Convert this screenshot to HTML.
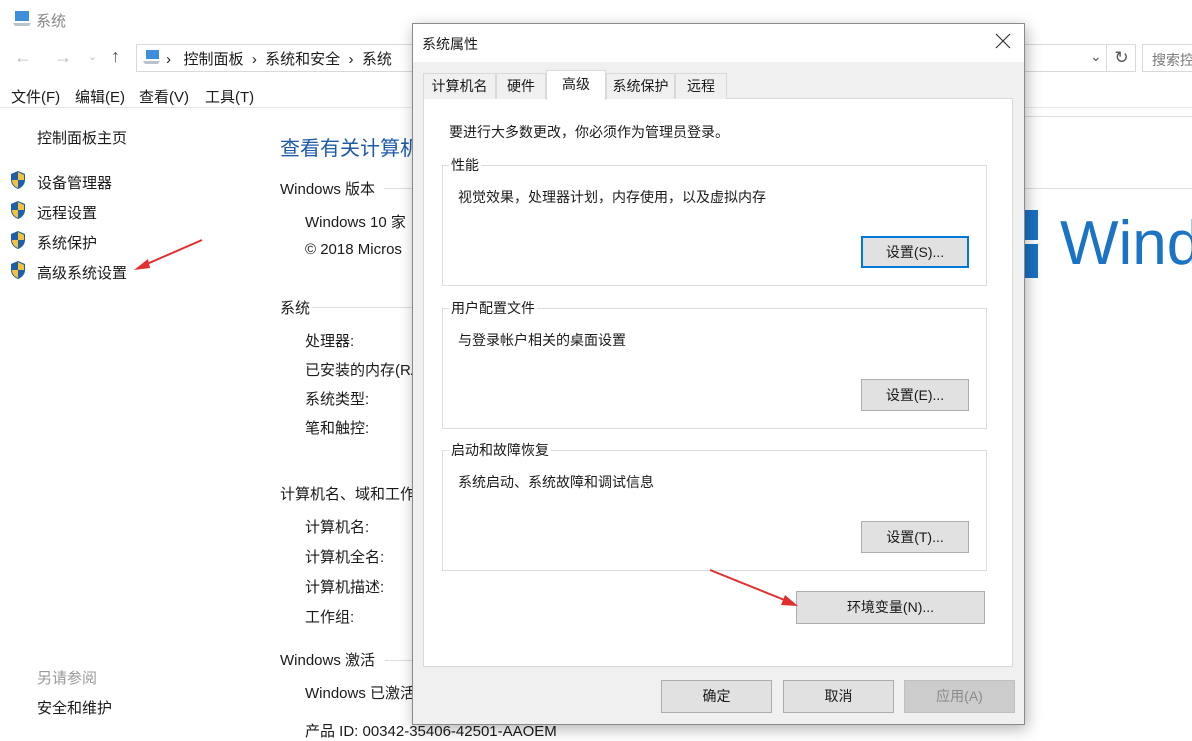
<!DOCTYPE html>
<html><head><meta charset="utf-8"><style>
*{margin:0;padding:0;box-sizing:border-box}
body{width:1192px;height:738px;overflow:hidden;background:#fff;font-family:"Liberation Sans","Noto Sans CJK SC",sans-serif;color:#1a1a1a;position:relative;font-size:14px}
.a{position:absolute;white-space:nowrap}
.bg{font-size:15px}
.shield{position:absolute;width:18px;height:20px}
.btn{position:absolute;background:#e1e1e1;border:1px solid #adadad;text-align:center;font-size:14px;line-height:30px}
.grp{position:absolute;border:1px solid #dcdcdc}
.grp .t{position:absolute;left:6px;top:-10px;background:#fff;padding:0 2px;line-height:18px}
.tab{position:absolute;top:73px;height:26px;background:#f0f0f0;border:1px solid #d9d9d9;border-bottom:none;line-height:24px;text-align:center;font-size:14px}
</style></head><body>
<svg class="a" style="left:12px;top:10px" width="20" height="16"><rect x="3" y="1" width="14" height="10" fill="#3c8fd8"/><path d="M1 13h18l-2 3H3z" fill="#b8c4cc"/></svg>
<div class="a" style="left:36px;top:10px;color:#888;font-size:15px">系统</div>
<div class="a" style="left:14px;top:47px;color:#bbb;font-size:18px">←</div>
<div class="a" style="left:54px;top:47px;color:#bbb;font-size:18px">→</div>
<div class="a" style="left:88px;top:50px;color:#bbb;font-size:11px">⌄</div>
<div class="a" style="left:111px;top:46px;color:#555;font-size:18px">↑</div>
<div class="a" style="left:136px;top:44px;width:280px;height:28px;border:1px solid #d9d9d9"></div>
<svg class="a" style="left:142px;top:49px" width="20" height="16"><rect x="4" y="1" width="13" height="9" fill="#3c8fd8"/><path d="M1 12h17l-2 3H3z" fill="#b8c4cc"/></svg>
<div class="a bg" style="left:166px;top:48px">›&nbsp;&nbsp;&nbsp;控制面板&nbsp;&nbsp;›&nbsp;&nbsp;系统和安全&nbsp;&nbsp;›&nbsp;&nbsp;系统</div>
<div class="a" style="left:1024px;top:44px;width:112px;height:28px;border:1px solid #d9d9d9;border-left:none"></div>
<div class="a" style="left:1090px;top:48px;color:#555;font-size:14px">⌄</div>
<div class="a" style="left:1106px;top:44px;width:30px;height:28px;border-left:1px solid #d9d9d9;text-align:center;line-height:28px;color:#555;font-size:17px">↻</div>
<div class="a" style="left:1142px;top:44px;width:60px;height:28px;border:1px solid #d9d9d9;color:#777;padding:5px 9px;font-size:14px">搜索控</div>
<div class="a bg" style="left:11px;top:86px">文件(F)</div>
<div class="a bg" style="left:75px;top:86px">编辑(E)</div>
<div class="a bg" style="left:139px;top:86px">查看(V)</div>
<div class="a bg" style="left:205px;top:86px">工具(T)</div>
<div class="a" style="left:0;top:107px;width:1192px;height:1px;background:#e8e8e8"></div>
<div class="a bg" style="left:37px;top:127px">控制面板主页</div>
<div class="a bg" style="left:37px;top:172px">设备管理器</div>
<div class="a bg" style="left:37px;top:202px">远程设置</div>
<div class="a bg" style="left:37px;top:232px">系统保护</div>
<div class="a bg" style="left:37px;top:262px">高级系统设置</div>
<svg class="shield" style="left:9px;top:170px" viewBox="0 0 18 20"><path d="M9 1L16 4V10C16 15 12 18 9 19C6 18 2 15 2 10V4Z" fill="#1f5fa8"/><path d="M9 2V10H15V5Z" fill="#f5c33b"/><path d="M3 10H9V18C6 17 3 14 3 10Z" fill="#f5c33b"/></svg>
<svg class="shield" style="left:9px;top:200px" viewBox="0 0 18 20"><path d="M9 1L16 4V10C16 15 12 18 9 19C6 18 2 15 2 10V4Z" fill="#1f5fa8"/><path d="M9 2V10H15V5Z" fill="#f5c33b"/><path d="M3 10H9V18C6 17 3 14 3 10Z" fill="#f5c33b"/></svg>
<svg class="shield" style="left:9px;top:230px" viewBox="0 0 18 20"><path d="M9 1L16 4V10C16 15 12 18 9 19C6 18 2 15 2 10V4Z" fill="#1f5fa8"/><path d="M9 2V10H15V5Z" fill="#f5c33b"/><path d="M3 10H9V18C6 17 3 14 3 10Z" fill="#f5c33b"/></svg>
<svg class="shield" style="left:9px;top:260px" viewBox="0 0 18 20"><path d="M9 1L16 4V10C16 15 12 18 9 19C6 18 2 15 2 10V4Z" fill="#1f5fa8"/><path d="M9 2V10H15V5Z" fill="#f5c33b"/><path d="M3 10H9V18C6 17 3 14 3 10Z" fill="#f5c33b"/></svg>
<svg class="a" style="left:130px;top:235px" width="75" height="40"><path d="M72 5L10 32" stroke="#e03030" stroke-width="2"/><path d="M4 35L18 24L20 33Z" fill="#e03030"/></svg>
<div class="a bg" style="left:37px;top:667px;color:#999">另请参阅</div>
<div class="a bg" style="left:37px;top:697px">安全和维护</div>
<div class="a" style="left:280px;top:132px;color:#1e5aa8;font-size:20px">查看有关计算机</div>
<div class="a bg" style="left:280px;top:178px">Windows 版本</div>
<div class="a" style="left:384px;top:188px;width:30px;height:1px;background:#ddd"></div>
<div class="a bg" style="left:305px;top:211px">Windows 10 家</div>
<div class="a bg" style="left:305px;top:241px">© 2018 Micros</div>
<div class="a bg" style="left:280px;top:297px">系统</div>
<div class="a" style="left:312px;top:307px;width:100px;height:1px;background:#ddd"></div>
<div class="a bg" style="left:305px;top:330px">处理器:</div>
<div class="a bg" style="left:305px;top:359px">已安装的内存(RA</div>
<div class="a bg" style="left:305px;top:388px">系统类型:</div>
<div class="a bg" style="left:305px;top:417px">笔和触控:</div>
<div class="a bg" style="left:280px;top:483px">计算机名、域和工作</div>
<div class="a bg" style="left:305px;top:516px">计算机名:</div>
<div class="a bg" style="left:305px;top:546px">计算机全名:</div>
<div class="a bg" style="left:305px;top:576px">计算机描述:</div>
<div class="a bg" style="left:305px;top:606px">工作组:</div>
<div class="a bg" style="left:280px;top:649px">Windows 激活</div>
<div class="a" style="left:385px;top:660px;width:30px;height:1px;background:#ddd"></div>
<div class="a bg" style="left:305px;top:682px">Windows 已激活</div>
<div class="a bg" style="left:305px;top:720px">产品 ID: 00342-35406-42501-AAOEM</div>
<div class="a" style="left:1024px;top:116px;width:168px;height:1px;background:#ddd"></div>
<div class="a" style="left:1024px;top:188px;width:168px;height:1px;background:#ddd"></div>
<div class="a" style="left:1024px;top:210px;width:14px;height:30px;background:#1a73c4"></div>
<div class="a" style="left:1024px;top:244px;width:14px;height:34px;background:#1a73c4"></div>
<div class="a" style="left:1060px;top:206px;color:#1a73c4;font-size:62px;line-height:76px">Wind</div>
<div class="a" style="left:412px;top:23px;width:613px;height:702px;background:#f0f0f0;border:1px solid #8a8a8a;box-shadow:2px 4px 14px rgba(0,0,0,.3)"></div>
<div class="a" style="left:413px;top:24px;width:611px;height:38px;background:#fff"></div>
<div class="a" style="left:422px;top:34px;font-size:14px">系统属性</div>
<svg class="a" style="left:995px;top:33px" width="16" height="16"><path d="M1 1L15 15M15 1L1 15" stroke="#333" stroke-width="1.2"/></svg>
<div class="a" style="left:423px;top:98px;width:590px;height:569px;background:#fff;border:1px solid #d9d9d9"></div>
<div class="tab" style="left:423px;width:73px">计算机名</div>
<div class="tab" style="left:496px;width:50px">硬件</div>
<div class="tab" style="left:606px;width:69px">系统保护</div>
<div class="tab" style="left:675px;width:52px">远程</div>
<div class="tab" style="left:546px;top:70px;width:60px;height:30px;background:#fff;line-height:26px">高级</div>
<div class="a" style="left:449px;top:122px">要进行大多数更改，你必须作为管理员登录。</div>
<div class="grp" style="left:442px;top:165px;width:545px;height:121px"><span class="t">性能</span></div>
<div class="a" style="left:458px;top:187px">视觉效果，处理器计划，内存使用，以及虚拟内存</div>
<div class="btn" style="left:861px;top:236px;width:108px;height:32px;border:2px solid #0078d7;line-height:28px">设置(S)...</div>
<div class="grp" style="left:442px;top:308px;width:545px;height:121px"><span class="t">用户配置文件</span></div>
<div class="a" style="left:458px;top:330px">与登录帐户相关的桌面设置</div>
<div class="btn" style="left:861px;top:379px;width:108px;height:32px">设置(E)...</div>
<div class="grp" style="left:442px;top:450px;width:545px;height:121px"><span class="t">启动和故障恢复</span></div>
<div class="a" style="left:458px;top:472px">系统启动、系统故障和调试信息</div>
<div class="btn" style="left:861px;top:521px;width:108px;height:32px">设置(T)...</div>
<div class="btn" style="left:796px;top:591px;width:189px;height:33px">环境变量(N)...</div>
<svg class="a" style="left:705px;top:565px" width="95" height="45"><path d="M5 5L82 36" stroke="#e03030" stroke-width="2"/><path d="M93 41L76 40L80 30Z" fill="#e03030"/></svg>
<div class="btn" style="left:661px;top:680px;width:111px;height:33px">确定</div>
<div class="btn" style="left:783px;top:680px;width:111px;height:33px">取消</div>
<div class="btn" style="left:904px;top:680px;width:111px;height:33px;background:#ccc;border-color:#bfbfbf;color:#8a8a8a">应用(A)</div>
</body></html>
